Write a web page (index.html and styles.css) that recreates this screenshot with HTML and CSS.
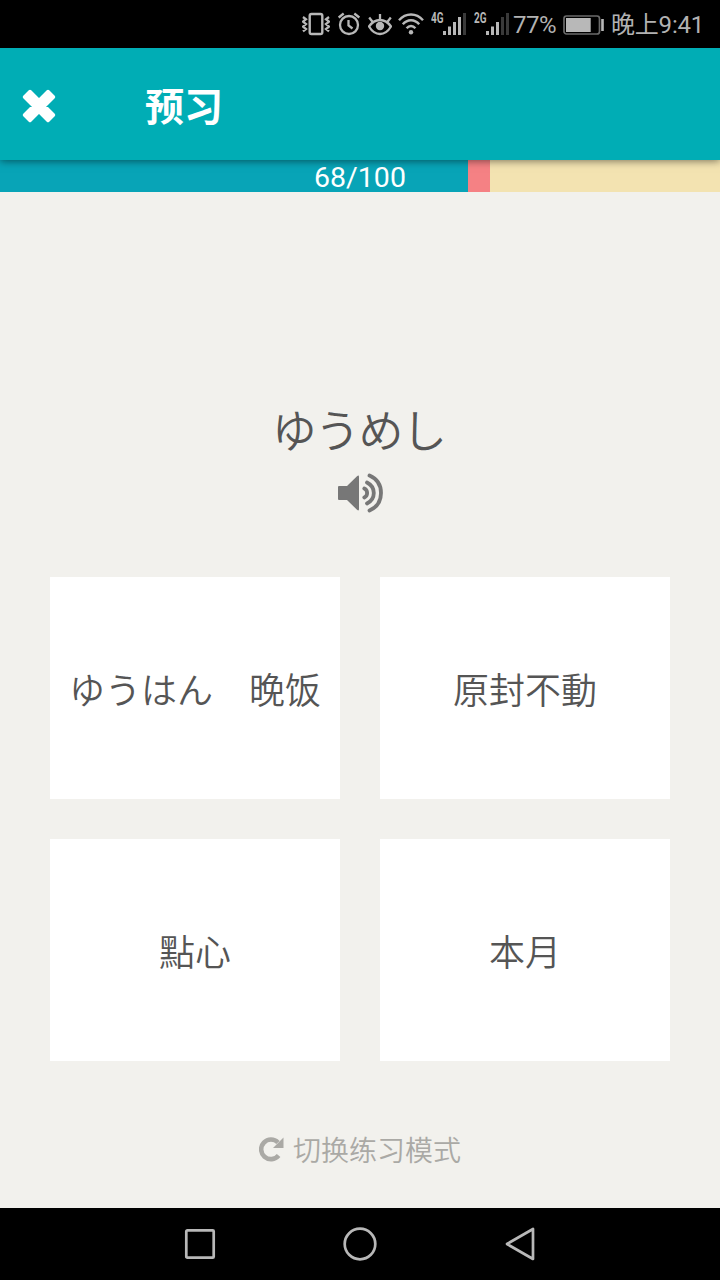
FILE: index.html
```html
<!DOCTYPE html>
<html lang="zh-CN">
<head>
  <meta charset="UTF-8">
  <meta name="viewport" content="width=device-width, initial-scale=1.0">
  <title>预习</title>
  <link rel="stylesheet" href="styles.css">
</head>
<body>
<div class="status-bar">
  <!-- vibrate, alarm, eye comfort, wifi -->
  <svg class="icon-vibrate" width="28" height="48" viewBox="0 0 28 48" fill="none" stroke="#b8b8b8">
    <rect x="7.7" y="14" width="12.6" height="20" rx="1.8" stroke-width="2.4"/>
    <path d="M1 17l3 2.2-3 2.5 3 2.4-3 2.5 3 2.4-3 2.3M27 17l-3 2.2 3 2.5-3 2.4 3 2.5-3 2.4 3 2.3" stroke-width="2.3"/>
  </svg>
  <svg class="icon-alarm" width="22" height="48" viewBox="0 0 22 48" fill="none" stroke="#b8b8b8" stroke-width="2.3">
    <circle cx="11" cy="25" r="9"/>
    <path d="M.7 17.5l5-4M21.3 17.5l-5-4"/>
    <path d="M10.5 20v5.5l4 3"/>
  </svg>
  <svg class="icon-eye" width="24" height="48" viewBox="0 0 24 48" fill="none" stroke="#b8b8b8" stroke-width="2.3">
    <path d="M1 26.5Q5.5 20 12 20t11 6.5Q18.5 34 12 34T1 26.5z"/>
    <path d="M12 20v-6M4.7 22l-3.5-4.5M19.3 22l3.5-4.5"/>
    <circle cx="12" cy="26" r="4.2" fill="#b8b8b8" stroke="none"/>
  </svg>
  <svg class="icon-wifi" width="26" height="48" viewBox="0 0 26 48" fill="none" stroke="#b8b8b8" stroke-width="2.4">
    <path d="M1 20.2Q6 14.5 13 14.5t12 5.7M4.8 24.3q3.4-4.1 8.2-4.1t8.2 4.1M8.6 28.2Q10.5 26 13 26t4.4 2.2"/>
    <circle cx="13" cy="32.2" r="2.2" fill="#b8b8b8" stroke="none"/>
  </svg>
  <svg class="icon-signal" width="36" height="48" viewBox="0 0 36 48" fill="#b8b8b8">
    <text class="network" x="0" y="22.8" textLength="12.5" lengthAdjust="spacingAndGlyphs">4G</text>
    <path d="M12 31h3v4h-3zM17 26.5h3V35h-3zM22 22h3v13h-3zM27 17h3v18h-3z"/>
    <path d="M32 13h3v22h-3z" fill="#3a3a3a"/>
  </svg>
  <svg class="icon-signal-2" width="36" height="48" viewBox="0 0 36 48" fill="#b8b8b8">
    <text class="network" x="0" y="22.8" textLength="12.5" lengthAdjust="spacingAndGlyphs">2G</text>
    <path d="M12 31h3v4h-3zM17 26.5h3V35h-3zM22 22h3v13h-3z"/>
    <path d="M27 17h3v18h-3zM32 13h3v22h-3z" fill="#3a3a3a"/>
  </svg>
  <span class="percent">77%</span>
  <svg class="icon-battery" width="42" height="48" viewBox="0 0 42 48">
    <rect x="1" y="16" width="35.5" height="18" rx="2.5" fill="none" stroke="#6a6a6a" stroke-width="1.7"/>
    <path d="M3 18h24.7v14H3zM38.2 19h2.6v12h-2.6z" fill="#b8b8b8"/>
  </svg>
  <span class="time">晚上9:41</span>
</div>

<header class="header">
  <svg class="close" width="34" height="34" viewBox="0 0 34 34">
    <path d="M8 2.5l9 9 9-9L31.5 8l-9 9 9 9-5.5 5.5-9-9-9 9L2.5 26l9-9-9-9z" fill="#fff" stroke="#fff" stroke-width="3.5" stroke-linejoin="round"/>
  </svg>
  <h1 class="title">预习</h1>
</header>

<div class="progress">
  <div class="done"></div>
  <div class="wrong"></div>
  <span class="count">68/100</span>
</div>

<main class="quiz">
  <div class="word">ゆうめし</div>
  <svg class="speaker" width="46" height="40" viewBox="0 0 46 40">
    <path d="M1 13h8L19 3.3q2-1.8 2 .7v32q0 2.5-2 .7L9 27H1q-1 0-1-1V14q0-1 1-1z" fill="#777"/>
    <path d="M26.3 15.5a5 5 0 0 1 0 9M29 9.5q6.8 3.5 6.8 10.5T29 30.5M31.5 2.5Q43 7.5 43 20t-11.5 17.5" fill="none" stroke="#777" stroke-width="3.8" stroke-linecap="round"/>
  </svg>
  <div class="options">
    <div class="option">ゆうはん　晚饭</div>
    <div class="option">原封不動</div>
    <div class="option">點心</div>
    <div class="option">本月</div>
  </div>
  <div class="switch-mode">
    <svg class="icon-redo" width="25" height="26" viewBox="0 0 25 26">
      <path d="M19.6 18.5A9.8 9.8 0 1 1 19 5.5" fill="none" stroke="#aaa9a5" stroke-width="4.6"/>
      <path d="M24.5.5V11H14z" fill="#aaa9a5"/>
    </svg>
    <span>切换练习模式</span>
  </div>
</main>

<nav class="nav-bar">
  <svg width="34" height="34" viewBox="0 0 34 34"><rect x="3.3" y="3.3" width="27.4" height="27.4" rx="1"/></svg>
  <svg width="34" height="34" viewBox="0 0 34 34"><circle cx="17" cy="17" r="15.3"/></svg>
  <svg width="34" height="34" viewBox="0 0 34 34"><path d="M30 2v30L4 17z"/></svg>
</nav>
</body>
</html>
```
FILE: styles.css
```css
body {
    margin: 0;
    height: 1280px;
    display: flex;
    flex-direction: column;
    font-family: Roboto, "Noto Sans CJK SC", sans-serif;
    background-color: #f2f1ed;
    color: #555;
}

svg {
    display: block;
    flex: none;
}

.status-bar {
    height: 48px;
    box-sizing: border-box;
    padding-left: 302px;
    display: flex;
    background-color: #000;
    color: #b2b2b2;
    font-size: 24px;
    line-height: 51px;
    white-space: nowrap;
}

.icon-alarm {
    margin-left: 8px;
}

.icon-eye {
    margin-left: 8px;
}

.icon-wifi {
    margin-left: 6px;
}

.icon-signal {
    margin-left: 7px;
}

.icon-signal-2 {
    margin-left: 7px;
}

.network {
    font-size: 14px;
    font-weight: bold;
}

.percent {
    width: 50px;
    margin-left: 3px;
    letter-spacing: -0.5px;
}

.icon-battery {
    margin-right: 6px;
}

.time {
    letter-spacing: -0.2px;
}

.header {
    position: relative;
    z-index: 1;
    height: 112px;
    box-sizing: border-box;
    padding-left: 22px;
    display: flex;
    align-items: center;
    background-color: #00adb5;
    color: #fff;
    box-shadow: 0 1px 8px rgba(0, 0, 0, 0.5);
}

.close {
    margin-top: 4px;
}

.title {
    margin: 7px 0 0 89px;
    font-size: 39px;
    line-height: 60px;
}

.progress {
    position: relative;
    height: 32px;
    display: flex;
    background-color: #f3e3b1;
}

.done {
    width: 468px;
    background-color: #08a4b7;
}

.wrong {
    width: 22px;
    background-color: #f58184;
}

.count {
    position: absolute;
    left: 0;
    right: 0;
    text-align: center;
    color: #fff;
    font-size: 28.5px;
    line-height: 35px;
}

.quiz {
    flex: 1;
    display: flex;
    flex-direction: column;
    align-items: center;
}

.word {
    margin-top: 205px;
    font-family: "Noto Sans CJK JP", sans-serif;
    font-size: 45px;
    font-weight: 350;
    letter-spacing: -1.6px;
    padding-right: 3px;
    line-height: 64px;
}

.speaker {
    margin: 12px 0 0 1px;
}

.options {
    width: 620px;
    margin-top: 64px;
    display: grid;
    grid-template-columns: 1fr 1fr;
    grid-auto-rows: 222px;
    gap: 40px;
}

.option {
    display: flex;
    align-items: center;
    justify-content: center;
    padding-bottom: 1px;
    box-sizing: border-box;
    background-color: #fff;
    font-size: 36px;
    font-weight: 350;
    font-family: "Noto Sans CJK SC", sans-serif;
}

.switch-mode {
    margin-top: 65px;
    display: flex;
    align-items: center;
    gap: 9px;
    color: #aaa9a5;
    font-size: 28px;
    font-weight: 350;
    line-height: 44px;
}

.switch-mode span {
    padding-top: 4px;
}

.icon-redo {
    margin-bottom: 1px;
}

.nav-bar {
    height: 72px;
    display: flex;
    align-items: center;
    justify-content: center;
    gap: 126px;
    background-color: #000;
    fill: none;
    stroke: #b8b8b8;
    stroke-width: 2.7;
    stroke-linejoin: round;
}
```
